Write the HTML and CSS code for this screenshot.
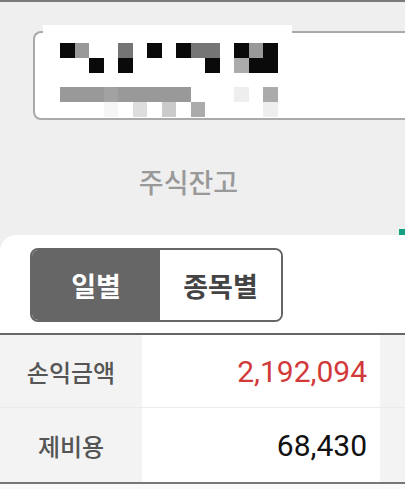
FILE: index.html
```html
<!DOCTYPE html>
<html lang="ko">
<head>
    <meta charset="UTF-8">
    <meta name="viewport" content="width=device-width, initial-scale=1.0">
    <title>주식잔고</title>
    <link rel="stylesheet" href="styles.css">
</head>
<body>

    <div class="account">
        <!-- 계좌정보 가림 -->
        <div class="mosaic">
            <span class="k"></span><span class="g"></span><span></span><span></span><span class="d"></span><span></span><span class="k"></span><span></span><span class="k"></span><span class="d"></span><span class="d"></span><span></span><span class="k"></span><span class="g"></span><span class="k"></span>
            <span></span><span></span><span class="k"></span><span></span><span class="k"></span><span></span><span></span><span></span><span></span><span></span><span class="k"></span><span></span><span class="a"></span><span class="k"></span><span class="k"></span>
            <span></span><span></span><span></span><span></span><span></span><span></span><span></span><span></span><span></span><span></span><span></span><span></span><span></span><span></span><span></span>
            <span class="g"></span><span class="g"></span><span class="g"></span><span class="g2"></span><span class="g"></span><span class="g"></span><span class="g"></span><span class="g"></span><span class="g"></span><span></span><span></span><span></span><span class="e"></span><span></span><span class="a"></span>
            <span></span><span></span><span></span><span class="f"></span><span></span><span class="l"></span><span></span><span class="c"></span><span></span><span class="a"></span><span></span><span></span><span></span><span></span><span class="e"></span>
        </div>
    </div>

    <div class="title-row">
        <h1 class="title">주식잔고</h1>
        <span class="tab-mark"></span>
    </div>

    <div class="panel">
        <div class="toggle">
            <button class="active">일별</button>
            <button>종목별</button>
        </div>
    </div>

    <div class="summary">
        <div class="row">
            <div class="label">손익금액</div>
            <div class="value plus">2,192,094</div>
            <div class="side"></div>
        </div>
        <div class="row">
            <div class="label">제비용</div>
            <div class="value">68,430</div>
            <div class="side"></div>
        </div>
    </div>

    <div class="rest"></div>

</body>
</html>
```

FILE: styles.css
```css
/* Allgemeine Stile */
body {
    font-family: Roboto, "Noto Sans CJK KR", sans-serif;
    background-color: #efefef;
    margin: 0;
    border-top: 2px solid #7a7a7a;
    overflow: hidden;
}

.account {
    position: relative;
    margin: 29px 0 0 33px;
    height: 85px;
    border: 2px solid #aaa;
    border-right: none;
    border-radius: 8px 0 0 8px;
    background-color: #fff;
}

.mosaic {
    position: absolute;
    left: 8px;
    top: -8px;
    width: 249px;
    height: 92px;
    padding: 18px 0 0 17px;
    box-sizing: border-box;
    background-color: #fff;
    display: grid;
    grid-template-columns: repeat(15, 14.5px);
    grid-template-rows: repeat(5, 14.8px);
}

.mosaic .k { background-color: #0a0a0a; }
.mosaic .d { background-color: #757575; }
.mosaic .g { background-color: #999; }
.mosaic .g2 { background-color: #a2a2a2; }
.mosaic .a { background-color: #ababab; }
.mosaic .c { background-color: #cacaca; }
.mosaic .l { background-color: #ddd; }
.mosaic .e { background-color: #eee; }
.mosaic .f { background-color: #f6f6f6; }

.title-row {
    height: 115px;
    display: flex;
    flex-direction: column;
}

.title {
    flex: 1;
    margin: 0;
    padding: 14px 28px 0 0;
    display: flex;
    justify-content: center;
    align-items: center;
    font-size: 27px;
    font-weight: 500;
    color: #999;
}

.tab-mark {
    align-self: flex-end;
    width: 6px;
    height: 6px;
    background-color: #14a083;
}

.panel {
    background-color: #fff;
    border-top-left-radius: 16px;
    padding: 13px 0 11px 30px;
    border-bottom: 2px solid #666;
}

.toggle {
    display: flex;
    width: 253px;
    height: 74px;
    box-sizing: border-box;
    border: 2px solid #666;
    border-radius: 8px;
    overflow: hidden;
}

.toggle button {
    flex: 1;
    border: none;
    background-color: #fff;
    color: #444;
    font-family: inherit;
    font-size: 27px;
    font-weight: 700;
    padding: 0;
}

.toggle button.active {
    flex: 0 0 128px;
    background-color: #666;
    color: #fff;
}

.summary {
    background-color: #fff;
    border-bottom: 2px solid #777;
}

.row {
    display: grid;
    grid-template-columns: 142px 238px 1fr;
    height: 72px;
    border-bottom: 1px solid #ebebeb;
}

.row:last-child {
    height: 74px;
    border-bottom: none;
}

.label {
    background-color: #f3f3f3;
    display: flex;
    justify-content: center;
    align-items: center;
    font-size: 24px;
    font-weight: 500;
    color: #555;
}

.value {
    display: flex;
    justify-content: flex-end;
    align-items: center;
    padding-right: 13px;
    font-size: 30px;
    color: #111;
}

.value.plus {
    color: #d23a3a;
}

.side {
    background-color: #f3f3f3;
}

.rest {
    height: 5px;
    background-color: #fafafa;
}
```
